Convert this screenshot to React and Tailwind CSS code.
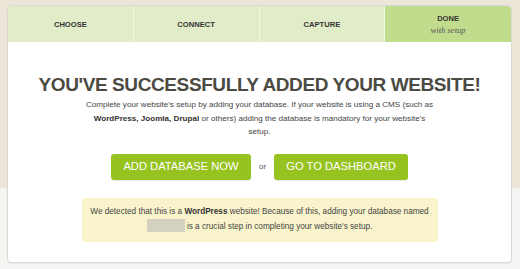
import React from 'react';

const steps = [
  { label: 'CHOOSE' },
  { label: 'CONNECT' },
  { label: 'CAPTURE' },
  { label: 'DONE', sub: 'with setup', active: true },
];

function StepTab({ step, last }) {
  return (
    <div
      className={`flex flex-col items-center justify-center pt-[2px] ${
        step.active ? 'bg-[#c2dc8e]' : 'bg-[#e1edc8]'
      } ${last ? '' : 'border-r border-[#f1f6e6]'}`}
    >
      <span className="text-[7.6px] font-bold leading-[10px] text-[#333]">{step.label}</span>
      {step.sub && (
        <span className="font-['Liberation_Serif',serif] italic text-[8.6px] leading-[11px] text-[#555] mt-[1px]">
          {step.sub}
        </span>
      )}
    </div>
  );
}

export default function App() {
  return (
    <div className="w-[520px] h-[269px] overflow-hidden pt-[5px] pl-[7px] font-['Liberation_Sans',Arial,sans-serif] bg-[linear-gradient(to_bottom,#ebe6d8_188px,#f4f4f2_188px)]">
      <div className="w-[505px] h-[258px] bg-white border border-[#d9d9d4] rounded-t-[5px] rounded-b-[4px] overflow-hidden shadow-[0_1px_1px_rgba(0,0,0,0.05)]">
        <div className="grid grid-cols-4 h-[36px]">
          {steps.map((s, i) => (
            <StepTab key={s.label} step={s} last={i === steps.length - 1} />
          ))}
        </div>

        <div className="flex flex-col items-center">
          <h1 className="mt-[32px] text-[19px] leading-[22px] font-bold tracking-[-0.4px] text-[#4b4b43]">
            YOU'VE SUCCESSFULLY ADDED YOUR WEBSITE!
          </h1>
          <p className="mt-[2px] w-[354px] text-center text-[8.1px] leading-[13.5px] text-[#444]">
            Complete your website's setup by adding your database. If your website is using a CMS (such as{' '}
            <b className="text-[#333]">WordPress, Joomla, Drupal</b> or others) adding the database is mandatory for
            your website's setup.
          </p>

          <div className="mt-[15px] flex items-center">
            <button className="h-[26px] w-[140px] rounded-[3px] bg-[#97c320] text-white text-[11.2px] shadow-[0_1px_0_rgba(0,0,0,0.08)]">
              ADD DATABASE NOW
            </button>
            <span className="w-[23px] text-center text-[8px] text-[#555]">or</span>
            <button className="h-[26px] w-[134px] rounded-[3px] bg-[#97c320] text-white text-[11.2px] shadow-[0_1px_0_rgba(0,0,0,0.08)]">
              GO TO DASHBOARD
            </button>
          </div>

          <div className="mt-[18px] w-[356px] h-[44px] flex items-center justify-center rounded-[3px] bg-[#f9f4cb] px-[8px]">
            <p className="text-center text-[8.2px] leading-[14.6px] text-[#444]">
              We detected that this is a <b className="text-[#333]">WordPress</b> website! Because of this, adding your
              database named <span className="inline-block w-[38px] h-[13px] align-middle bg-[#d3d1c2] -mt-[2px]" /> is
              a crucial step in completing your website's setup.
            </p>
          </div>
        </div>
      </div>
    </div>
  );
}
